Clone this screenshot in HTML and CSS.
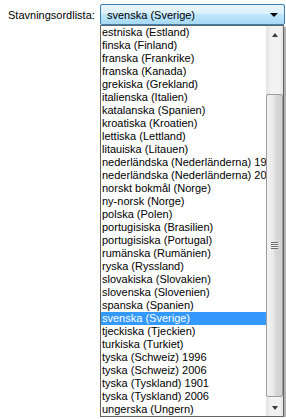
FILE: index.html
```html
<!DOCTYPE html>
<html lang="sv">
<head>
    <meta charset="utf-8">
    <title>Stavningsordlista</title>
    <link rel="stylesheet" href="styles.css">
</head>
<body>
    <div class="field">
        <label class="caption">Stavningsordlista:</label>
        <div class="combo">
            <span class="combo-text">svenska (Sverige)</span>
            <span class="combo-arrow"></span>
        </div>
    </div>
    <div class="dropdown">
        <ul class="options">
            <li>estniska (Estland)</li>
            <li>finska (Finland)</li>
            <li>franska (Frankrike)</li>
            <li>franska (Kanada)</li>
            <li>grekiska (Grekland)</li>
            <li>italienska (Italien)</li>
            <li>katalanska (Spanien)</li>
            <li>kroatiska (Kroatien)</li>
            <li>lettiska (Lettland)</li>
            <li>litauiska (Litauen)</li>
            <li>nederländska (Nederländerna) 1995</li>
            <li>nederländska (Nederländerna) 2005</li>
            <li>norskt bokmål (Norge)</li>
            <li>ny-norsk (Norge)</li>
            <li>polska (Polen)</li>
            <li>portugisiska (Brasilien)</li>
            <li>portugisiska (Portugal)</li>
            <li>rumänska (Rumänien)</li>
            <li>ryska (Ryssland)</li>
            <li>slovakiska (Slovakien)</li>
            <li>slovenska (Slovenien)</li>
            <li>spanska (Spanien)</li>
            <li class="selected">svenska (Sverige)</li>
            <li>tjeckiska (Tjeckien)</li>
            <li>turkiska (Turkiet)</li>
            <li>tyska (Schweiz) 1996</li>
            <li>tyska (Schweiz) 2006</li>
            <li>tyska (Tyskland) 1901</li>
            <li>tyska (Tyskland) 2006</li>
            <li>ungerska (Ungern)</li>
        </ul>
        <div class="scrollbar">
            <div class="sb-button"><span class="sb-up"></span></div>
            <div class="sb-track"></div>
            <div class="sb-thumb"><span class="grip"></span></div>
            <div class="sb-button"><span class="sb-down"></span></div>
        </div>
    </div>
</body>
</html>
```

FILE: styles.css
```css
body {
    margin: 0;
    background-color: white;
    color: black;
    font-family: "Liberation Sans", Arial, sans-serif;
    font-size: 11px;
}

.field {
    display: flex;
    align-items: center;
    padding-top: 4px;
    height: 21px;
}

.caption {
    width: 92px;
    padding-left: 8px;
}

.combo {
    display: flex;
    align-items: center;
    justify-content: space-between;
    box-sizing: border-box;
    width: 185px;
    height: 21px;
    padding: 0 6px 0 6px;
    border: 1px solid #3c7fb1;
    border-radius: 2px;
    background: linear-gradient(#eaf6fd, #d9f0fc 45%, #bee6fd 50%, #a7d9f5);
}

.combo-arrow {
    width: 0;
    height: 0;
    border-left: 4px solid transparent;
    border-right: 4px solid transparent;
    border-top: 4px solid black;
}

.dropdown {
    display: flex;
    box-sizing: border-box;
    margin-left: 100px;
    width: 184px;
    height: 392px;
    border: 1px solid #646464;
    background-color: white;
    box-shadow: 2px 2px 1px rgba(0, 0, 0, 0.3);
}

.options {
    flex: 1;
    margin: 0;
    padding: 0;
    list-style: none;
    overflow: hidden;
}

.options li {
    height: 13px;
    line-height: 13px;
    padding-left: 1px;
    white-space: nowrap;
    overflow: hidden;
}

.options li.selected {
    background-color: #3399ff;
    color: white;
}

.scrollbar {
    display: flex;
    flex-direction: column;
    width: 17px;
    background: linear-gradient(to right, #e3e3e3, #f2f2f2 30%, #f2f2f2 80%, #e3e3e3);
}

.sb-button {
    display: flex;
    justify-content: center;
    align-items: center;
    height: 17px;
}

.sb-up,
.sb-down {
    width: 0;
    height: 0;
    border-left: 3px solid transparent;
    border-right: 3px solid transparent;
}

.sb-up {
    border-bottom: 4px solid #3c3c3c;
}

.sb-down {
    border-top: 4px solid #3c3c3c;
}

.sb-track {
    height: 51px;
}

.sb-thumb {
    display: flex;
    justify-content: center;
    align-items: center;
    flex: 1;
    margin: 0 0 2px 0;
    border: 1px solid #9b9b9b;
    border-radius: 2px;
    background: linear-gradient(to right, #f3f3f3, #e8e8e8 45%, #d9d9d9 55%, #cfcfcf);
}

.grip {
    width: 7px;
    height: 7px;
    background: repeating-linear-gradient(#6b6b6b 0, #6b6b6b 1px, #f4f4f4 1px, #f4f4f4 2px);
}
```
